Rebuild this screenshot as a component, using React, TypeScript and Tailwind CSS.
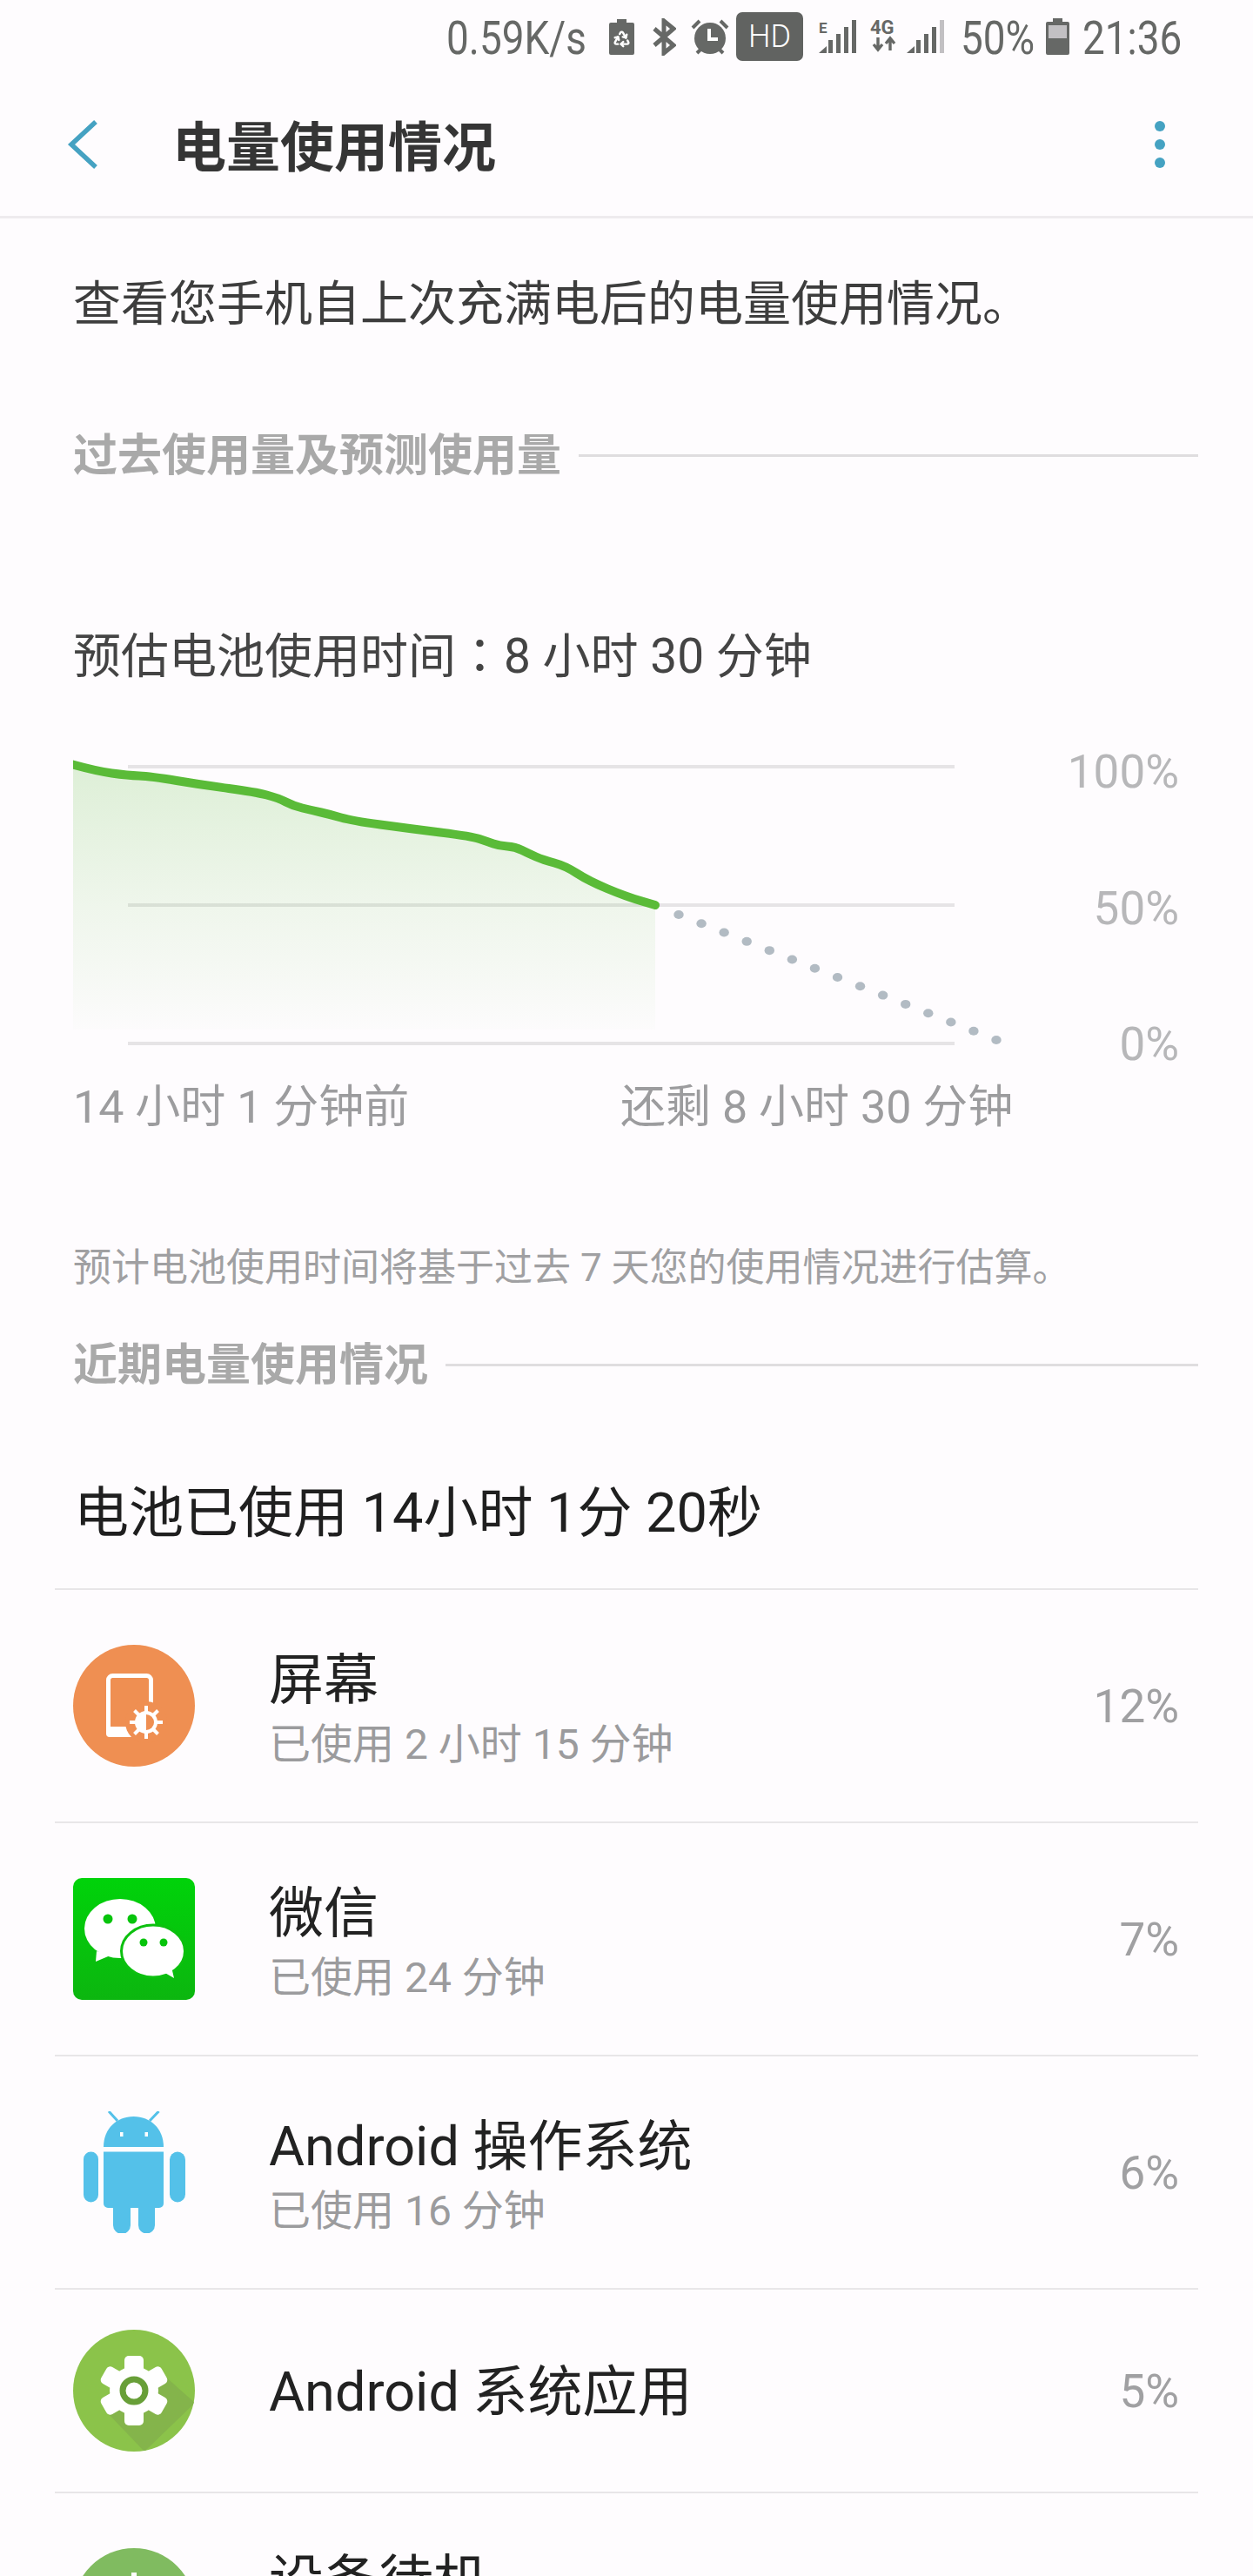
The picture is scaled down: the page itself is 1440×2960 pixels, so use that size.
import { Recycle } from "lucide-react";

const curve: Array<[number, number]> = [
  [78, 877], [110, 886], [147, 891], [173, 892], [233, 902], [293, 910], [320, 917], [337, 926],
  [358, 931], [380, 936], [404, 943], [470, 952], [542, 961], [560, 967], [574, 972], [592, 973],
  [608, 981], [624, 988], [650, 995], [676, 1012], [719, 1030], [753, 1040]
];

const smoothPath = (points: Array<[number, number]>) => {
  let d = `M${points[0][0]} ${points[0][1]}`;
  for (let i = 1; i < points.length - 1; i++) {
    const midX = (points[i][0] + points[i + 1][0]) / 2;
    const midY = (points[i][1] + points[i + 1][1]) / 2;
    d += ` Q${points[i][0]} ${points[i][1]} ${midX} ${midY}`;
  }
  const last = points[points.length - 1];
  return `${d} L${last[0]} ${last[1]}`;
};

const dots = Array.from({ length: 15 }, (_, i) => ({ x: 780 + i * 26.07, y: 1051 + i * 10.29 }));

const BatteryRecycleIcon = () => (
  <svg width="29" height="41" viewBox="0 0 29 41" className="shrink-0">
    <path d="M2 4h7V0h11v4h7a2 2 0 0 1 2 2v33a2 2 0 0 1-2 2H2a2 2 0 0 1-2-2V6a2 2 0 0 1 2-2z" fill="#666866" />
    <Recycle x="4" y="12" width="21" height="21" color="#fff" strokeWidth={2.8} />
  </svg>
);

const BluetoothIcon = () => (
  <svg width="28" height="43" viewBox="0 0 28 43" fill="none" stroke="#666866" strokeWidth="5" className="shrink-0">
    <path d="M3 12 25 31 14 40V3l11 9L3 31" />
  </svg>
);

const AlarmIcon = () => (
  <svg width="44" height="41" viewBox="0 0 44 41" className="shrink-0">
    <circle cx="22" cy="22" r="18" fill="#666866" />
    <path d="M21 11v12h10" fill="none" stroke="#fff" strokeWidth="4" />
    <path d="M2 10 10 2M42 10 34 2M7 39l4-4M37 39l-4-4" stroke="#666866" strokeWidth="4" />
  </svg>
);

const SignalBars = ({ lastColor }: { lastColor: string }) => (
  <>
    <path d="M0 38 9 30V38Z" fill="#666866" />
    <rect x="11" y="23" width="5" height="15" fill="#666866" />
    <rect x="20" y="16" width="5" height="22" fill="#666866" />
    <rect x="29" y="8" width="5" height="30" fill="#666866" />
    <rect x="38" y="0" width="5" height="38" fill={lastColor} />
  </>
);

const ESignalIcon = () => (
  <svg width="43" height="38" viewBox="0 0 43 38" className="shrink-0">
    <SignalBars lastColor="#666866" />
    <text x="0" y="15" fontSize="17" fontWeight="700" fill="#666866" fontFamily="Roboto, sans-serif">E</text>
  </svg>
);

const FourGIcon = () => (
  <svg width="32" height="40" viewBox="0 0 32 40" className="shrink-0">
    <text x="0" y="17" fontSize="22" fontWeight="700" fill="#666866" fontFamily="Roboto, sans-serif">4G</text>
    <path d="M9 21v12M4 29l5 6 5-6M23 36V24M18 28l5-6 5 6" fill="none" stroke="#666866" strokeWidth="3.4" />
  </svg>
);

const BatteryIcon = () => (
  <svg width="27" height="42" viewBox="0 0 27 42" className="shrink-0">
    <path d="M2 4h6V0h11v4h6a2 2 0 0 1 2 2v34a2 2 0 0 1-2 2H2a2 2 0 0 1-2-2V6a2 2 0 0 1 2-2z" fill="#666866" />
    <rect x="3" y="8" width="21" height="15" fill="#c2c0c3" />
  </svg>
);

const ScreenIcon = () => (
  <svg width="140" height="140" viewBox="0 0 140 140" className="shrink-0">
    <circle cx="70" cy="70" r="70" fill="#ef8f52" />
    <rect x="40.5" y="35.5" width="49" height="68" rx="5" fill="none" stroke="#fff" strokeWidth="5" />
    <rect x="38" y="94" width="40" height="12" rx="4" fill="#fff" />
    <circle cx="84" cy="89" r="24" fill="#ef8f52" />
    <g stroke="#fff" strokeWidth="4">
      <path d="M84 70v38M65 89h38M70.5 75.5l27 27M97.5 75.5l-27 27" />
    </g>
    <circle cx="84" cy="89" r="13" fill="#fff" />
    <path d="M84 80a9 9 0 0 1 0 18z" fill="#ef8f52" />
  </svg>
);

const WechatIcon = () => (
  <svg width="140" height="140" viewBox="0 0 140 140" className="shrink-0 rounded-[10px]">
    <defs>
      <linearGradient id="wechat-bg" x1="0" y1="0" x2="0" y2="1">
        <stop offset="0" stopColor="#00d30a" />
        <stop offset="1" stopColor="#0cb60f" />
      </linearGradient>
    </defs>
    <rect width="140" height="140" fill="url(#wechat-bg)" />
    <ellipse cx="54" cy="58" rx="41" ry="34" fill="#fff" />
    <path d="M27 84 26 96 45 88z" fill="#fff" />
    <ellipse cx="92" cy="84" rx="36.5" ry="30" fill="#fff" stroke="#0cc00f" strokeWidth="3" />
    <path d="M104 108 116 115 113 102z" fill="#fff" />
    <circle cx="40" cy="47" r="5.5" fill="#06c40c" />
    <circle cx="68" cy="47" r="5.5" fill="#06c40c" />
    <circle cx="81" cy="74" r="4.5" fill="#06c40c" />
    <circle cx="104" cy="74" r="4.5" fill="#06c40c" />
  </svg>
);

const AndroidIcon = () => (
  <div className="flex w-[140px] shrink-0 justify-center">
    <svg width="117" height="140" viewBox="0 0 117 140">
      <g fill="#54c1e9">
        <path d="M23 41C23 20 38 6 57.500 6S92 20 92 41z" />
        <path d="M23 46.500h69V106a5 5 0 0 1-5 5H82v20a9.500 9.500 0 0 1-19 0v-20h-9v20a10 10 0 0 1-20 0v-20h-6a5 5 0 0 1-5-5z" />
        <rect x="0" y="46.500" width="17" height="58" rx="8.500" />
        <rect x="99" y="46.500" width="18" height="58" rx="9" />
      </g>
      <path d="M29 0 39 11M86.500 0 76 11" stroke="#54c1e9" strokeWidth="3" />
      <rect x="42" y="24" width="3.500" height="5" fill="#fff" />
      <rect x="70.500" y="24" width="3.500" height="5" fill="#fff" />
    </svg>
  </div>
);

const SystemAppIcon = () => (
  <svg width="140" height="140" viewBox="0 0 140 140" className="shrink-0">
    <defs>
      <clipPath id="sys-circle">
        <circle cx="70" cy="70" r="70" />
      </clipPath>
    </defs>
    <circle cx="70" cy="70" r="70" fill="#8bc34a" />
    <path d="M38 94 82 140 140 84 104 52z" fill="#84b44b" clipPath="url(#sys-circle)" />
    <circle cx="70" cy="70" r="28" fill="#fff" />
    <g fill="#fff">
      <rect x="59" y="30" width="22" height="80" rx="5" />
      <rect x="59" y="30" width="22" height="80" rx="5" transform="rotate(60 70 70)" />
      <rect x="59" y="30" width="22" height="80" rx="5" transform="rotate(120 70 70)" />
    </g>
    <circle cx="70" cy="70" r="13" fill="#fff" stroke="#689f38" strokeWidth="7" />
  </svg>
);

const IdleIcon = () => (
  <svg width="140" height="140" viewBox="0 0 140 140" className="shrink-0">
    <circle cx="70" cy="70" r="70" fill="#80bb60" />
    <rect x="67" y="28" width="6" height="40" fill="#fff" />
  </svg>
);

const SectionTitle = ({ title }: { title: string }) => (
  <div className="flex h-[60px] items-center pl-[84px] pr-[63px]">
    <h2 className="pt-[2px] text-[51px] font-bold leading-[60px] text-[#a9a9a9]">{title}</h2>
    <div className="ml-[20px] h-[3px] flex-1 bg-[#dfdddf]" />
  </div>
);

const usageRows = [
  { icon: <ScreenIcon />, name: "屏幕", used: "已使用 2 小时 15 分钟", percent: "12%", height: "h-[268px]" },
  { icon: <WechatIcon />, name: "微信", used: "已使用 24 分钟", percent: "7%", height: "h-[268px]" },
  { icon: <AndroidIcon />, name: "Android 操作系统", used: "已使用 16 分钟", percent: "6%", height: "h-[268px]" },
  { icon: <SystemAppIcon />, name: "Android 系统应用", used: "", percent: "5%", height: "h-[234px]" }
];

export default function App() {
  return (
    <div className="h-[2960px] w-[1440px] overflow-hidden bg-[#fefcfe] font-['Roboto','Noto_Sans_CJK_SC',sans-serif]">
      <div className="flex h-[84px] items-center justify-end pr-[83px] text-[#666866]">
        <span className="mt-[4px] inline-block w-[162px] origin-left scale-x-[0.85] whitespace-nowrap text-[54px] leading-[60px]">0.59K/s</span>
        <div className="ml-[25px]"><BatteryRecycleIcon /></div>
        <div className="ml-[20px]"><BluetoothIcon /></div>
        <div className="ml-[17px]"><AlarmIcon /></div>
        <div className="ml-[8px] flex h-[56px] w-[77px] items-center justify-center rounded-[7px] bg-[#616361] text-[36px] font-light text-white">HD</div>
        <div className="ml-[18px]"><ESignalIcon /></div>
        <div className="ml-[16px]"><FourGIcon /></div>
        <div className="ml-[10px]"><svg width="43" height="38" viewBox="0 0 43 38"><SignalBars lastColor="#c2c0c3" /></svg></div>
        <span className="ml-[19px] mt-[4px] inline-block w-[81px] origin-left scale-x-[0.85] whitespace-nowrap text-[54px] leading-[60px]">50%</span>
        <div className="ml-[17px]"><BatteryIcon /></div>
        <span className="ml-[15px] mt-[4px] inline-block w-[113px] origin-left scale-x-[0.85] whitespace-nowrap text-[54px] leading-[60px]">21:36</span>
      </div>

      <header className="flex h-[167px] items-center border-b-[3px] border-[#eeebee] pl-[77px] pr-[101px]">
        <svg width="36" height="58" viewBox="0 0 36 58" fill="none" stroke="#45a2c2" strokeWidth="5.5" className="shrink-0">
          <path d="M33 3 5 29l28 26" />
        </svg>
        <h1 className="ml-[85px] flex-1 pt-[10px] text-[62px] font-bold leading-[70px] text-[#353535]">电量使用情况</h1>
        <div className="flex flex-col gap-[9px]">
          <div className="h-[12px] w-[12px] rounded-full bg-[#45a2c2]" />
          <div className="h-[12px] w-[12px] rounded-full bg-[#45a2c2]" />
          <div className="h-[12px] w-[12px] rounded-full bg-[#45a2c2]" />
        </div>
      </header>

      <p className="flex h-[194px] items-center pl-[84px] pt-[3px] text-[55px] text-[#3d3d3d]">查看您手机自上次充满电后的电量使用情况。</p>

      <div className="mt-[48px]">
        <SectionTitle title="过去使用量及预测使用量" />
      </div>

      <p className="mt-[161px] h-[76px] pl-[84px] text-[55px] leading-[70px] text-[#444444]">
        预估电池使用时间<span className="font-['Noto_Sans_CJK_TC']">：</span>8 小时 30 分钟
      </p>

      <div className="mt-[67px] flex h-[373px] items-start pl-[84px] pr-[85px]">
        <svg width="1070" height="340" viewBox="84 870 1070 340" className="mt-[13px] shrink-0">
          <defs>
            <linearGradient id="chart-fill" x1="0" y1="0" x2="0" y2="1">
              <stop offset="0" stopColor="#5abb38" stopOpacity="0.2" />
              <stop offset="0.55" stopColor="#5abb38" stopOpacity="0.09" />
              <stop offset="0.8" stopColor="#5abb38" stopOpacity="0.05" />
              <stop offset="1" stopColor="#5abb38" stopOpacity="0.01" />
            </linearGradient>
          </defs>
          <rect x="147" y="879" width="950" height="4" fill="#e6e4e6" />
          <rect x="147" y="1038" width="950" height="4" fill="#e6e4e6" />
          <rect x="147" y="1197" width="950" height="4" fill="#e6e4e6" />
          <path d={`${smoothPath(curve)} L753 1183 L84 1183 L84 877 Z`} fill="url(#chart-fill)" />
          <path d={smoothPath(curve)} fill="none" stroke="#5abb38" strokeWidth="10" strokeLinecap="round" strokeLinejoin="round" />
          {dots.map((dot) => (
            <ellipse key={dot.x} cx={dot.x} cy={dot.y} rx="5.700" ry="5" fill="#b2bbc3" />
          ))}
        </svg>
        <div className="flex h-full flex-1 flex-col items-end justify-between text-[53px] leading-[60px] text-[#b7b7b9]">
          <span>100%</span>
          <span>50%</span>
          <span>0%</span>
        </div>
      </div>

      <div className="mt-[13px] flex h-[60px] items-center pl-[84px] text-[52px] text-[#9c9c9e]">
        <span className="w-[629px]">14 小时 1 分钟前</span>
        <span>还剩 8 小时 30 分钟</span>
      </div>

      <p className="mt-[124px] flex h-[60px] items-center pl-[84px] text-[44px] text-[#a0a0a2]">预计电池使用时间将基于过去 7 天您的使用情况进行估算。</p>

      <div className="mt-[51px]">
        <SectionTitle title="近期电量使用情况" />
      </div>

      <p className="mt-[110px] flex h-[60px] items-center pl-[85px] pt-[2px] text-[63px] text-[#1f1f1f]">电池已使用 14小时 1分 20秒</p>

      <div className="mx-[63px] mt-[57px] border-t-2 border-[#e8e6e8]">
        {usageRows.map((row) => (
          <div key={row.name} className={`flex items-center border-b-2 border-[#e8e6e8] pl-[21px] pr-[22px] ${row.height}`}>
            {row.icon}
            <div className={`ml-[85px] flex-1 ${row.used ? "pt-[9px]" : "pt-[4px]"}`}>
              <p className="text-[63px] leading-[72px] text-[#222222]">{row.name}</p>
              {row.used ? <p className="mt-[8px] text-[48px] leading-[60px] text-[#9b9b9d]">{row.used}</p> : null}
            </div>
            <span className="mt-[4px] text-[53px] text-[#a0a0a2]">{row.percent}</span>
          </div>
        ))}
        <div className="flex items-center pl-[21px] pt-[63px]">
          <IdleIcon />
          <div className="ml-[85px] self-start pt-[2px]">
            <p className="text-[63px] leading-[72px] text-[#222222]">设备待机</p>
          </div>
        </div>
      </div>
    </div>
  );
}
